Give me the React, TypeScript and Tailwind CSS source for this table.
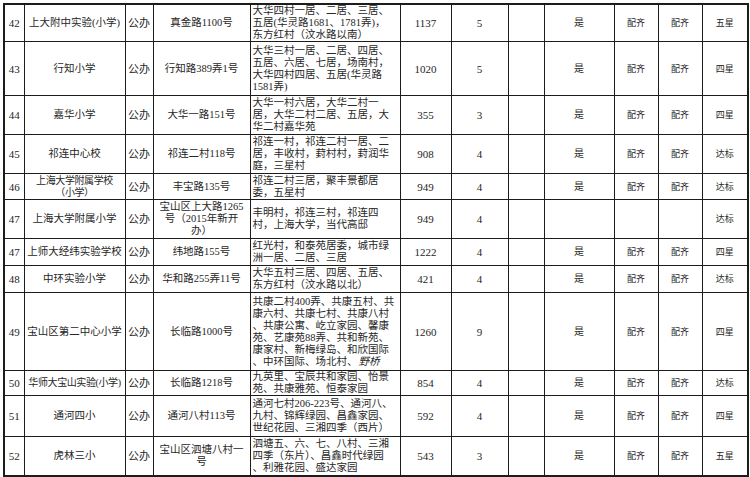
type Row = {
  no: string;
  name: string;
  kind: string;
  road: string;
  area: string;
  pupils: string;
  classes: string;
  yes: string;
  a: string;
  b: string;
  level: string;
  h: string;
};

const rows: Row[] = [
  {
    no: "42",
    name: "上大附中实验(小学)",
    kind: "公办",
    road: "真金路1100号",
    area: "大华四村一居、二居、三居、\n五居(华灵路1681、1781弄)，\n东方红村（汶水路以南）",
    pupils: "1137",
    classes: "5",
    yes: "是",
    a: "配齐",
    b: "配齐",
    level: "五星",
    h: "h-[37px]",
  },
  {
    no: "43",
    name: "行知小学",
    kind: "公办",
    road: "行知路389弄1号",
    area: "大华三村一居、二居、四居、\n五居、六居、七居，场南村，\n大华四村四居、五居(华灵路\n1581弄)",
    pupils: "1020",
    classes: "5",
    yes: "是",
    a: "配齐",
    b: "配齐",
    level: "四星",
    h: "h-[54px]",
  },
  {
    no: "44",
    name: "嘉华小学",
    kind: "公办",
    road: "大华一路151号",
    area: "大华一村六居，大华二村一\n居，大华二村二居、五居，大\n华二村嘉华苑",
    pupils: "355",
    classes: "3",
    yes: "是",
    a: "配齐",
    b: "配齐",
    level: "四星",
    h: "h-[39px]",
  },
  {
    no: "45",
    name: "祁连中心校",
    kind: "公办",
    road: "祁连二村118号",
    area: "祁连一村，祁连二村一居、二\n居，丰收村，葑村村，葑润华\n庭，三星村",
    pupils: "908",
    classes: "4",
    yes: "是",
    a: "配齐",
    b: "配齐",
    level: "达标",
    h: "h-[39px]",
  },
  {
    no: "46",
    name: "上海大学附属学校\n（小学）",
    kind: "公办",
    road: "丰宝路135号",
    area: "祁连二村三居，聚丰景都居\n委，五星村",
    pupils: "949",
    classes: "4",
    yes: "是",
    a: "配齐",
    b: "配齐",
    level: "达标",
    h: "h-[26px]",
  },
  {
    no: "47",
    name: "上海大学附属小学",
    kind: "公办",
    road: "宝山区上大路1265\n号（2015年新开\n办）",
    area: "丰明村，祁连三村，祁连四\n村，上海大学，当代高邸",
    pupils: "949",
    classes: "4",
    yes: "",
    a: "",
    b: "",
    level: "达标",
    h: "h-[39px]",
  },
  {
    no: "47",
    name: "上师大经纬实验学校",
    kind: "公办",
    road: "纬地路155号",
    area: "红光村，和泰苑居委，城市绿\n洲一居、二居、三居",
    pupils: "1222",
    classes: "4",
    yes: "是",
    a: "配齐",
    b: "配齐",
    level: "四星",
    h: "h-[27px]",
  },
  {
    no: "48",
    name: "中环实验小学",
    kind: "公办",
    road: "华和路255弄11号",
    area: "大华五村三居、四居、五居、\n东方红村（汶水路以北）",
    pupils: "421",
    classes: "4",
    yes: "是",
    a: "配齐",
    b: "配齐",
    level: "达标",
    h: "h-[27px]",
  },
  {
    no: "49",
    name: "宝山区第二中心小学",
    kind: "公办",
    road: "长临路1000号",
    area: "共康二村400弄、共康五村、共\n康六村、共康七村、共康八村\n、共康公寓、屹立家园、馨康\n苑、艺康苑88弄、共和新苑、\n康家村、新梅绿岛、和欣国际\n、中环国际、场北村、",
    pupils: "1260",
    classes: "9",
    yes: "是",
    a: "配齐",
    b: "配齐",
    level: "四星",
    h: "h-[78px]",
  },
  {
    no: "50",
    name: "华师大宝山实验(小学)",
    kind: "公办",
    road: "长临路1218号",
    area: "九英里、宝辰共和家园、怡景\n苑、共康雅苑、恒泰家园",
    pupils: "854",
    classes: "4",
    yes: "是",
    a: "配齐",
    b: "配齐",
    level: "达标",
    h: "h-[25px]",
  },
  {
    no: "51",
    name: "通河四小",
    kind: "公办",
    road: "通河八村113号",
    area: "通河七村206-223号、通河八、\n九村、锦辉绿园、昌鑫家园、\n世纪花园、三湘四季（西片）",
    pupils: "592",
    classes: "4",
    yes: "是",
    a: "配齐",
    b: "配齐",
    level: "四星",
    h: "h-[41px]",
  },
  {
    no: "52",
    name: "虎林三小",
    kind: "公办",
    road: "宝山区泗塘八村一\n号",
    area: "泗塘五、六、七、八村、三湘\n四季（东片）、昌鑫时代绿园\n、利雅花园、盛达家园",
    pupils: "543",
    classes: "3",
    yes: "是",
    a: "配齐",
    b: "配齐",
    level: "五星",
    h: "h-[39px]",
  },
];

const cell = "border-[1.5px] border-[#1c1c1c] p-0 align-middle";

export default function App() {
  return (
    <div className="w-[750px] h-[477px] bg-white pl-[3px] pt-[3px] overflow-hidden text-[#262626] font-['Liberation_Serif','Noto_Sans_CJK_SC',serif]">
      <table className="table-fixed border-collapse border-2 border-[#1c1c1c] w-[744px]">
        <colgroup>
          <col className="w-[20px]" />
          <col className="w-[101px]" />
          <col className="w-[28px]" />
          <col className="w-[97px]" />
          <col className="w-[150px]" />
          <col className="w-[51px]" />
          <col className="w-[57px]" />
          <col className="w-[36px]" />
          <col className="w-[70px]" />
          <col className="w-[44px]" />
          <col className="w-[44px]" />
          <col className="w-[46px]" />
        </colgroup>
        <tbody>
          {rows.map((r, i) => (
            <tr key={i} className={r.h}>
              <td className={`${cell} text-center text-[11px] leading-[12px]`}>{r.no}</td>
              <td
                className={`${cell} text-center leading-[12px] whitespace-pre overflow-hidden ${
                  r.name.length > 10 ? "text-[10px] tracking-[-0.4px]" : "text-[10.5px]"
                }`}
              >
                {r.name}
              </td>
              <td className={`${cell} text-center text-[11px] leading-[12px]`}>{r.kind}</td>
              <td className={`${cell} text-center text-[10.5px] leading-[12px] whitespace-pre`}>
                {r.road}
              </td>
              <td className={`${cell} text-left text-[10.5px] leading-[12px] whitespace-pre pl-[2px] overflow-hidden`}>
                {r.area}
                {r.no === "49" && <span className="italic ml-[1px]">野桥</span>}
              </td>
              <td className={`${cell} text-center text-[11px] leading-[12px]`}>{r.pupils}</td>
              <td className={`${cell} text-center text-[11px] leading-[12px]`}>{r.classes}</td>
              <td className={cell}></td>
              <td className={`${cell} text-center text-[10px] leading-[12px]`}>{r.yes}</td>
              <td className={`${cell} text-center text-[9px] leading-[12px]`}>{r.a}</td>
              <td className={`${cell} text-center text-[9px] leading-[12px]`}>{r.b}</td>
              <td className={`${cell} text-center text-[9px] leading-[12px]`}>{r.level}</td>
            </tr>
          ))}
        </tbody>
      </table>
    </div>
  );
}
